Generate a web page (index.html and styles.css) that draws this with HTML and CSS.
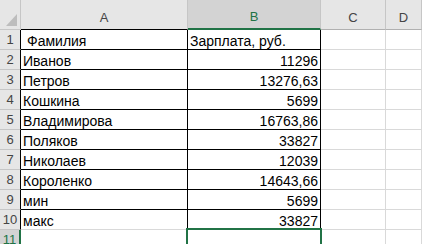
FILE: index.html
```html
<!DOCTYPE html>
<html lang="ru">
<head>
    <meta charset="UTF-8">
    <title>Зарплата</title>
    <link rel="stylesheet" href="styles.css">
</head>
<body>
    <div class="sheet">
        <div class="corner">
            <svg width="20" height="29" viewBox="0 0 20 29"><polygon points="6,26 17,26 17,14" fill="#bdbdbd"/></svg>
        </div>
        <div class="hd top-a">A</div>
        <div class="hd hd-sel">B</div>
        <div class="hd">C</div>
        <div class="hd">D</div>

        <div class="rh in">1</div>
        <div class="c bx indent">Фамилия</div>
        <div class="c bx">Зарплата, руб.</div>
        <div class="c"></div><div class="c"></div>

        <div class="rh in">2</div>
        <div class="c bx">Иванов</div>
        <div class="c bx num">11296</div>
        <div class="c"></div><div class="c"></div>

        <div class="rh in">3</div>
        <div class="c bx">Петров</div>
        <div class="c bx num">13276,63</div>
        <div class="c"></div><div class="c"></div>

        <div class="rh in">4</div>
        <div class="c bx">Кошкина</div>
        <div class="c bx num">5699</div>
        <div class="c"></div><div class="c"></div>

        <div class="rh in">5</div>
        <div class="c bx">Владимирова</div>
        <div class="c bx num">16763,86</div>
        <div class="c"></div><div class="c"></div>

        <div class="rh in">6</div>
        <div class="c bx">Поляков</div>
        <div class="c bx num">33827</div>
        <div class="c"></div><div class="c"></div>

        <div class="rh in">7</div>
        <div class="c bx">Николаев</div>
        <div class="c bx num">12039</div>
        <div class="c"></div><div class="c"></div>

        <div class="rh in">8</div>
        <div class="c bx">Короленко</div>
        <div class="c bx num">14643,66</div>
        <div class="c"></div><div class="c"></div>

        <div class="rh in">9</div>
        <div class="c bx">мин</div>
        <div class="c bx num">5699</div>
        <div class="c"></div><div class="c"></div>

        <div class="rh in">10</div>
        <div class="c bx last">макс</div>
        <div class="c bx num">33827</div>
        <div class="c"></div><div class="c"></div>

        <div class="rh rh-sel">11</div>
        <div class="c"></div>
        <div class="c"></div>
        <div class="c"></div><div class="c"></div>

        <div class="selection"></div>
    </div>
</body>
</html>
```

FILE: styles.css
```css
body {
    margin: 0;
    height: 244px;
    overflow: hidden;
    background: #fff;
    font-family: "Liberation Sans", Arial, sans-serif;
}

.sheet {
    position: relative;
    display: grid;
    grid-template-columns: 21px 167px 133px 65px 1fr;
    grid-template-rows: 30px repeat(11, 20px);
}

.sheet > div {
    box-sizing: border-box;
    border-right: 1px solid #d9d9d9;
    border-bottom: 1px solid #d9d9d9;
}

.corner {
    background: #e6e6e6;
    border-color: #c6c6c6 !important;
}

.corner svg {
    display: block;
}

.hd {
    display: flex;
    align-items: flex-end;
    justify-content: center;
    padding-bottom: 4px;
    background: #e6e6e6;
    color: #444;
    font-size: 13px;
    border-right-color: #c6c6c6 !important;
    border-bottom-color: #b0b0b0 !important;
}

.hd.top-a {
    border-bottom-color: #000 !important;
}

.hd.hd-sel {
    background: #d3d3d3;
    color: #217346;
    border-bottom: 2px solid #217346 !important;
}

.rh {
    display: flex;
    align-items: flex-end;
    justify-content: center;
    padding-bottom: 2px;
    background: #e6e6e6;
    color: #444;
    font-size: 13px;
    border-right-color: #c6c6c6 !important;
    border-bottom-color: #c6c6c6 !important;
}

.rh.in {
    border-right-color: #000 !important;
}

.rh.rh-sel {
    background: #d3d3d3;
    color: #217346;
    border-right: 2px solid #217346 !important;
}

.c {
    display: flex;
    align-items: flex-end;
    padding: 0 2px 0 2px;
    font-size: 14px;
    line-height: 16px;
    color: #000;
    white-space: nowrap;
}

.c.bx {
    border-right-color: #000;
    border-bottom-color: #000;
}

.c.bx.last {
    border-bottom-color: #d9d9d9;
}

.c.indent {
    padding-left: 6px;
}

.c.num {
    justify-content: flex-end;
}

.selection {
    position: absolute;
    left: 186px;
    top: 228px;
    width: 136px;
    height: 22px;
    border: 2px solid #217346 !important;
}
```
